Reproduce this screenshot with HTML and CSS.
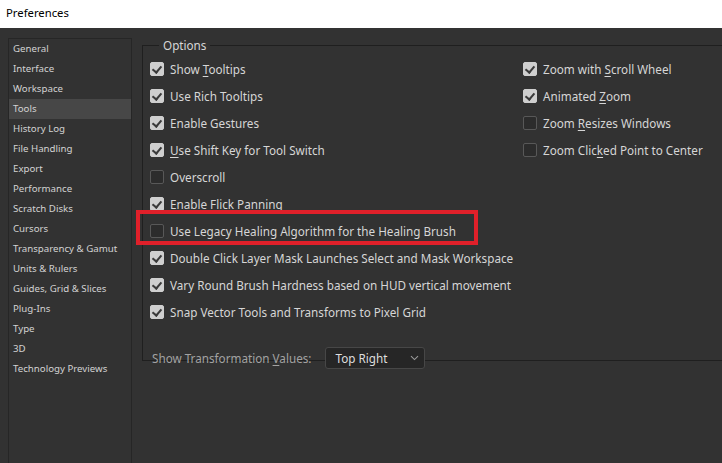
FILE: index.html
```html
<!DOCTYPE html>
<html>
<head>
<meta charset="utf-8">
<link rel="stylesheet" href="styles.css">
</head>
<body>
<div class="titlebar">Preferences</div>
<div class="main">
  <ul class="sidebar">
    <li>General</li>
    <li>Interface</li>
    <li>Workspace</li>
    <li class="sel">Tools</li>
    <li>History Log</li>
    <li>File Handling</li>
    <li>Export</li>
    <li>Performance</li>
    <li>Scratch Disks</li>
    <li>Cursors</li>
    <li>Transparency &amp; Gamut</li>
    <li>Units &amp; Rulers</li>
    <li>Guides, Grid &amp; Slices</li>
    <li>Plug-Ins</li>
    <li>Type</li>
    <li>3D</li>
    <li>Technology Previews</li>
  </ul>
  <fieldset class="options">
    <legend>Options</legend>
    <div class="cols">
      <div class="col left">
        <div class="row"><span class="cb on"></span><span>Show <u>T</u>ooltips</span></div>
        <div class="row"><span class="cb on"></span><span>Use Rich Tooltips</span></div>
        <div class="row"><span class="cb on"></span><span>Enable Gestures</span></div>
        <div class="row"><span class="cb on"></span><span><u>U</u>se Shift Key for Tool Switch</span></div>
        <div class="row"><span class="cb"></span><span>Overscroll</span></div>
        <div class="row"><span class="cb on"></span><span>Enable Flick Panning</span></div>
        <div class="row"><span class="cb"></span><span>Use Legacy Healing Algorithm for the Healing Brush</span></div>
        <div class="row"><span class="cb on"></span><span>Double Click Layer Mask Launches Select and Mask Workspace</span></div>
        <div class="row"><span class="cb on"></span><span>Vary Round Brush Hardness based on HUD vertical movement</span></div>
        <div class="row"><span class="cb on"></span><span>Snap Vector Tools and Transforms to Pixel Grid</span></div>
        <div class="tv">
          <span class="tvlabel">Show Transformation <u>V</u>alues:</span>
          <div class="select">Top Right
            <svg class="chev" width="9" height="6" viewBox="0 0 9 6"><path d="M1 1.2 L4.5 4.6 L8 1.2" fill="none" stroke="#9a9a9a" stroke-width="1.1"/></svg>
          </div>
        </div>
      </div>
      <div class="col right">
        <div class="row"><span class="cb on"></span><span>Zoom with <u>S</u>croll Wheel</span></div>
        <div class="row"><span class="cb on"></span><span>Animated <u>Z</u>oom</span></div>
        <div class="row"><span class="cb"></span><span>Zoom <u>R</u>esizes Windows</span></div>
        <div class="row"><span class="cb"></span><span>Zoom Clic<u>k</u>ed Point to Center</span></div>
      </div>
    </div>
  </fieldset>
</div>
<div class="highlight"></div>
</body>
</html>
```
FILE: styles.css
```css
html, body {
  margin: 0;
  padding: 0;
  width: 722px;
  height: 463px;
  overflow: hidden;
  background: #323232;
  font-family: "Noto Sans", "Open Sans", sans-serif;
}
body { position: relative; }
.titlebar {
  height: 28px;
  background: #ffffff;
  color: #000;
  font-size: 11.3px;
  line-height: 26px;
  padding-left: 6px;
}
.main {
  display: flex;
  align-items: flex-start;
  padding-left: 8px;
  padding-top: 9px;
}
.sidebar {
  list-style: none;
  margin: 1px 0 0 0;
  padding: 0;
  width: 122px;
  height: 440px;
  border: 1px solid #262626;
  color: #d2d2d2;
  font-size: 9.7px;
  flex: none;
}
.sidebar li {
  height: 20px;
  line-height: 20px;
  padding-left: 4px;
  white-space: nowrap;
}
.sidebar li.sel { background: #474747; }
.options {
  margin: 0 0 0 10px;
  padding: 0;
  width: 640px;
  height: 322px;
  border: 1px solid #1f1f1f;
  border-right-color: transparent;
  flex: none;
  min-inline-size: 0;
  color: #d6d6d6;
  font-size: 11.7px;
}
.options legend {
  margin-left: 16px;
  padding: 0 4px;
  line-height: 16px;
  font-size: 11.7px;
  color: #d6d6d6;
}
.cols {
  display: flex;
  padding-top: 2px;
}
.col.left { width: 373px; padding-left: 7px; }
.row {
  height: 27px;
  display: flex;
  align-items: center;
  white-space: nowrap;
}
.cb {
  width: 12px;
  height: 12px;
  border: 1px solid #585858;
  border-radius: 2px;
  background: #2c2c2c;
  margin-right: 6px;
  box-sizing: content-box;
  flex: none;
  position: relative;
}
.cb.on {
  background: #cfcfcf;
  border-color: #cfcfcf;
}
.cb.on::after {
  content: "";
  position: absolute;
  left: 3px;
  top: 1px;
  width: 4px;
  height: 7px;
  border-right: 2px solid #3a3a3a;
  border-bottom: 2px solid #3a3a3a;
  transform: rotate(40deg);
}
u { text-decoration-thickness: 1px; text-underline-offset: 2px; }
.tv {
  display: flex;
  align-items: center;
  margin-top: 22px;
  padding-left: 2px;
}
.tvlabel { color: #a2a2a2; margin-right: 14px; white-space: nowrap; }
.select {
  width: 100px;
  height: 22px;
  box-sizing: border-box;
  border: 1px solid #474747;
  border-radius: 3px;
  background: #262626;
  color: #dedede;
  padding-left: 9px;
  line-height: 20px;
  position: relative;
}
.chev { position: absolute; right: 5px; top: 7px; }
.highlight {
  position: absolute;
  left: 136px;
  top: 210px;
  width: 342px;
  height: 35px;
  box-sizing: border-box;
  border: 4px solid #e0202a;
}
```
